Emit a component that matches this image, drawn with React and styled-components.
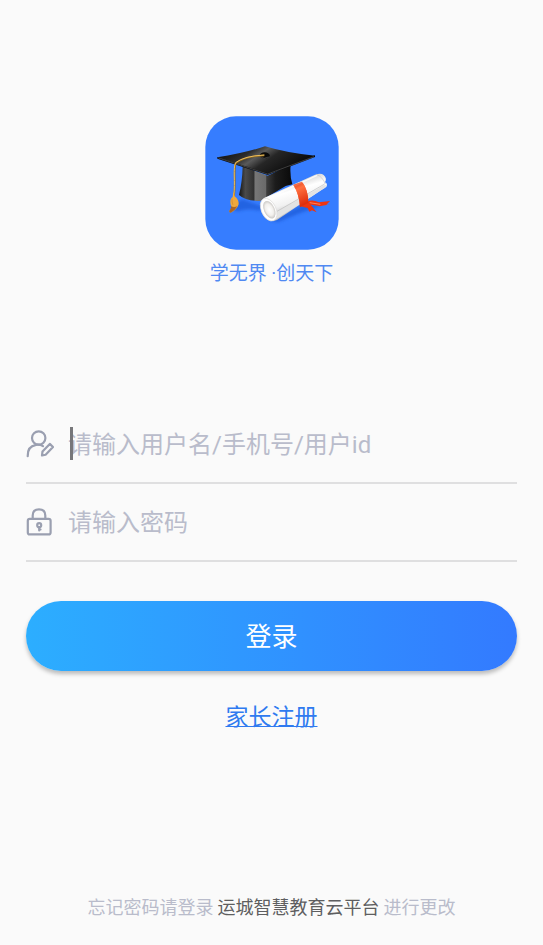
import React from 'react';
import styled, { createGlobalStyle } from 'styled-components';

const GlobalStyle = createGlobalStyle`
  * {
    box-sizing: border-box;
  }

  body {
    margin: 0;
    background: #fafafa;
    font-family: Roboto, 'Noto Sans CJK SC', sans-serif;
  }
`;

const Page = styled.main`
  min-height: 100vh;
  display: flex;
  flex-direction: column;
  padding: 116px 26px 23px;
`;

const Brand = styled.header`
  display: flex;
  flex-direction: column;
  align-items: center;
  gap: 12px;
  margin-bottom: 120px;
`;

const Logo = styled.svg`
  width: 134px;
  height: 134px;
`;

const Slogan = styled.p`
  margin: 0;
  font-size: 19px;
  line-height: 24px;
  color: #5089f2;
`;

const Form = styled.form`
  display: flex;
  flex-direction: column;
`;

const Field = styled.div`
  display: flex;
  align-items: center;
  gap: 14px;
  height: 78px;
  border-bottom: 2px solid #dfdfe0;
`;

const FieldIcon = styled.label`
  display: flex;
  flex: none;

  svg {
    width: 28px;
    height: 30px;
    fill: none;
    stroke: #9a9fb0;
    stroke-width: 2.2;
    stroke-linecap: round;
    stroke-linejoin: round;
  }
`;

const InputWrap = styled.div`
  position: relative;
  flex: 1;
  min-width: 0;
`;

const Input = styled.input`
  display: block;
  width: 100%;
  height: 36px;
  padding: 2px 0 0;
  border: none;
  outline: none;
  background: transparent;
  font-family: inherit;
  font-size: 24px;
  color: #333;

  &::placeholder {
    color: #b9bccb;
    opacity: 1;
  }
`;

const Caret = styled.span`
  position: absolute;
  left: 2px;
  top: 1px;
  width: 3px;
  height: 33px;
  background: #77777a;
`;

const LoginButton = styled.button`
  height: 70px;
  margin-top: 39px;
  padding: 0 0 4px;
  border: none;
  border-radius: 35px;
  background: linear-gradient(90deg, #2caeff, #337aff);
  box-shadow: 0 3px 4px rgba(0, 0, 0, 0.26);
  color: #fff;
  font-family: inherit;
  font-size: 26px;
  cursor: pointer;
`;

const RegisterLink = styled.a`
  align-self: center;
  margin-top: 30px;
  font-size: 23px;
  line-height: 34px;
  color: #2f7af0;
  text-decoration: underline;
  text-decoration-thickness: 1px;
`;

const Footer = styled.footer`
  display: flex;
  justify-content: center;
  gap: 4px;
  margin-top: auto;
  font-size: 18px;
  line-height: 28px;
  color: #b9bccb;
`;

const Platform = styled.span`
  color: #5e5e60;
`;

const GraduationLogo = () => (
  <Logo viewBox="30 33 402 400" aria-hidden="true">
    <defs>
      <linearGradient id="cap" x1="0" y1="0" x2="1" y2="0.4">
        <stop offset="0" stopColor="#050505" />
        <stop offset="0.36" stopColor="#2c2c2c" />
        <stop offset="0.48" stopColor="#5a5a5a" />
        <stop offset="0.62" stopColor="#262626" />
        <stop offset="1" stopColor="#080808" />
      </linearGradient>
      <linearGradient id="band" x1="0" y1="0" x2="1" y2="0">
        <stop offset="0" stopColor="#151515" />
        <stop offset="0.12" stopColor="#4a4a4a" />
        <stop offset="0.28" stopColor="#303030" />
        <stop offset="0.3" stopColor="#777" />
        <stop offset="0.5" stopColor="#6a6a6a" />
        <stop offset="0.52" stopColor="#3c3c3c" />
        <stop offset="0.68" stopColor="#1c1c1c" />
        <stop offset="1" stopColor="#090909" />
      </linearGradient>
      <linearGradient id="paper" x1="0.35" y1="0.2" x2="0.6" y2="0.8">
        <stop offset="0" stopColor="#d4d4d4" />
        <stop offset="0.3" stopColor="#fff" />
        <stop offset="0.65" stopColor="#f1f1f1" />
        <stop offset="1" stopColor="#bcbcbc" />
      </linearGradient>
      <linearGradient id="ribbon" x1="0" y1="0" x2="0.3" y2="1">
        <stop offset="0" stopColor="#d93412" />
        <stop offset="0.35" stopColor="#ff7040" />
        <stop offset="1" stopColor="#e02f0c" />
      </linearGradient>
      <radialGradient id="roll">
        <stop offset="0" stopColor="#fff" />
        <stop offset="0.65" stopColor="#f2f0ed" />
        <stop offset="1" stopColor="#cac8c5" />
      </radialGradient>
      <filter id="soft" x="-20%" y="-40%" width="140%" height="180%">
        <feGaussianBlur stdDeviation="5" />
      </filter>
    </defs>
    <rect x="31" y="33" width="400" height="400" rx="92" fill="#367dff" />
    <g fill="#1553cf" opacity="0.6" filter="url(#soft)">
      <path d="M112 315Q122 286 143 282L209 306L194 316Q150 308 132 318Z" />
      <path d="M226 346L333 294L379 302L314 324L250 350Z" />
    </g>
    <path d="M143 182Q142 230 132 269Q151 287 196 287L272 242L292 237Q284 212 287 178L218 211Z" fill="url(#band)" />
    <path d="M67 160L218 209L360 155L360 150L214 199L67 155Z" fill="#090909" />
    <path d="M67 156Q150 143 210 123Q280 144 360 151L219 204Z" fill="url(#cap)" />
    <path d="M70 158L218 206L357 154" fill="none" stroke="#777" strokeWidth="1.5" />
    <ellipse cx="209" cy="150" rx="15" ry="9" fill="#090909" />
    <path d="M196 154Q206 163 221 155" fill="none" stroke="#555" strokeWidth="2" />
    <path d="M208 150Q147 153 123 173C114 188 123 229 117 273" fill="none" stroke="#8d681f" strokeWidth="5" />
    <path d="M208 149Q147 152 122 172C113 188 122 229 116 273" fill="none" stroke="#ebbd5f" strokeWidth="3" />
    <path d="M115 260L119 273Q132 283 131 297Q126 313 107 322Q99 321 106 312Q112 304 107 298Q103 282 113 275Z" fill="#eea83c" />
    <path d="M111 280Q110 290 114 299" fill="none" stroke="#cf8a2c" strokeWidth="2" />
    <path d="M107 303Q118 307 127 303Q121 315 107 322Q99 321 106 312Q110 307 107 303Z" fill="#94501c" opacity="0.75" />
    <path d="M337 290Q350 281 372 291L405 287L394 298L406 297L374 303L337 296Z" fill="#ef3511" />
    <path d="M316 303L341 291Q349 301 365 321L351 315L343 319L338 308Z" fill="#ed3510" />
    <path d="M344 292L376 297" stroke="#ff835b" strokeWidth="3" />
    <path d="M207 278L360 208Q378 202 386 209Q397 219 390 231Q399 235 394 245L379 254L246 344Q219 355 204 329Q190 303 207 278Z" fill="url(#paper)" />
    <path d="M246 319L387 240L395 239L389 248L241 343Z" fill="#e3e3e3" />
    <path d="M246 318L389 236" stroke="#bbb" strokeWidth="2" />
    <path d="M365 207Q383 215 391 236" fill="none" stroke="#c5c5c5" strokeWidth="2" />
    <path d="M295 239Q312 265 315 305L340 292Q340 253 321 229Z" fill="url(#ribbon)" />
    <path d="M224 276L366 210" stroke="#fff" strokeWidth="4" opacity="0.8" />
    <path d="M295 239Q312 265 315 305L340 292Q340 253 321 229Z" fill="url(#ribbon)" opacity="0.8" />
    <ellipse cx="221" cy="313" rx="22" ry="36" transform="rotate(-25 221 313)" fill="#fff" stroke="#dddcda" strokeWidth="2" />
    <ellipse cx="223" cy="313" rx="16" ry="28" transform="rotate(-25 223 313)" fill="url(#roll)" />
  </Logo>
);

const UserIcon = () => (
  <svg viewBox="0 0 28 30" aria-hidden="true">
    <circle cx="12.7" cy="9" r="6.7" />
    <path d="M1.7 27.2C1.4 20.4 4.8 16.8 10 15.9Q14 15.2 17 17.2" />
    <path d="M16 26.5L16.5 22.5L23.8 14.9L27 18L19.6 25.7Z" />
  </svg>
);

const LockIcon = () => (
  <svg viewBox="0 0 28 30" aria-hidden="true">
    <rect x="1.8" y="11.8" width="22.8" height="15.6" rx="2" />
    <path d="M6.7 11.5V8.5Q6.7 2.3 13 2.3Q19.3 2.3 19.3 8.5V11.5" />
    <circle cx="13.2" cy="18.2" r="2" />
    <path d="M13.2 20.2V23.5M13.2 22.5H14.5" />
  </svg>
);

const App = () => (
  <>
    <GlobalStyle />
    <Page>
      <Brand>
        <GraduationLogo />
        <Slogan>学无界 ·创天下</Slogan>
      </Brand>
      <Form onSubmit={(e) => e.preventDefault()}>
        <Field>
          <FieldIcon htmlFor="account">
            <UserIcon />
          </FieldIcon>
          <InputWrap>
            <Input
              id="account"
              type="text"
              aria-label="用户名"
              placeholder="请输入用户名/手机号/用户id"
            />
            <Caret />
          </InputWrap>
        </Field>
        <Field>
          <FieldIcon htmlFor="password">
            <LockIcon />
          </FieldIcon>
          <InputWrap>
            <Input
              id="password"
              type="password"
              aria-label="密码"
              placeholder="请输入密码"
            />
          </InputWrap>
        </Field>
        <LoginButton type="submit">登录</LoginButton>
        <RegisterLink href="#register">家长注册</RegisterLink>
      </Form>
      <Footer>
        <span>忘记密码请登录</span>
        <Platform>运城智慧教育云平台</Platform>
        <span>进行更改</span>
      </Footer>
    </Page>
  </>
);

export default App;
